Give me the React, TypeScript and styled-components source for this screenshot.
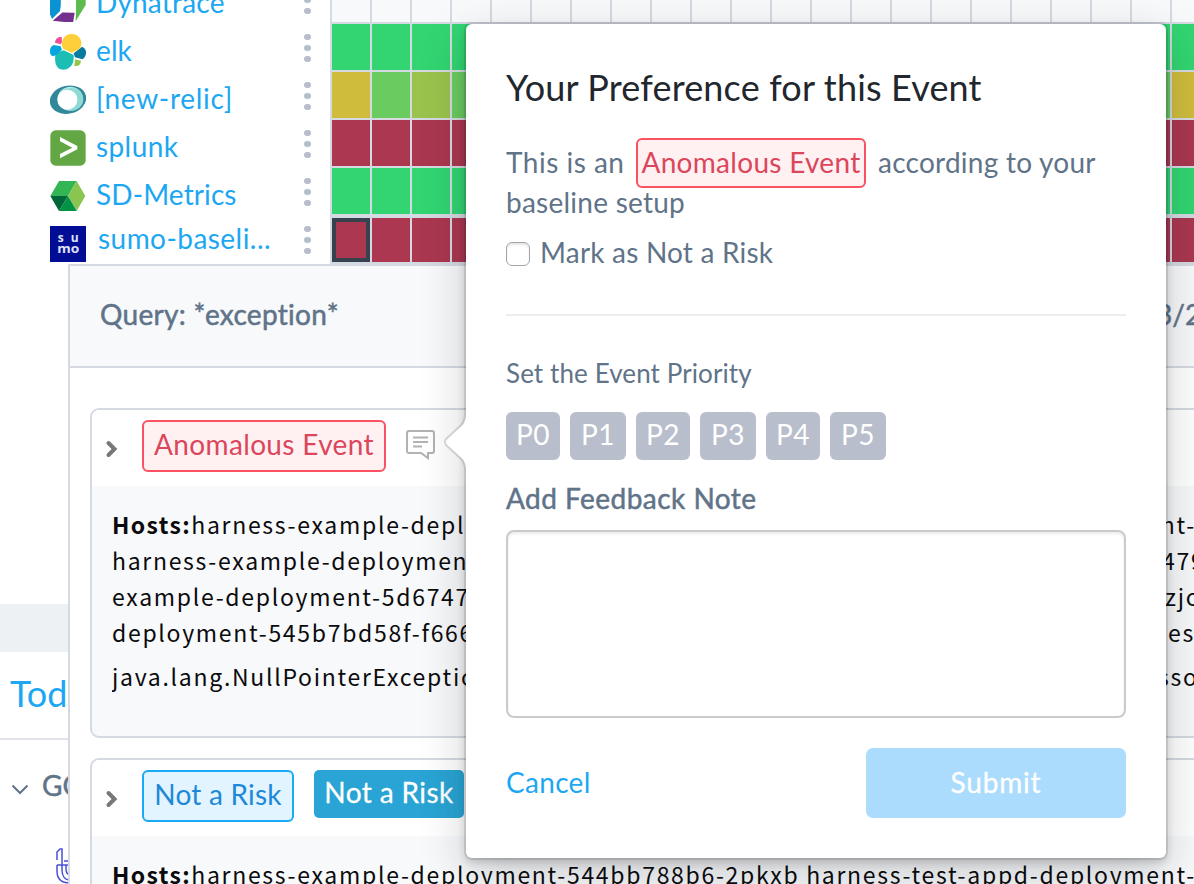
import React from "react";
import styled, { createGlobalStyle, css } from "styled-components";

const GlobalStyle = createGlobalStyle`
  * { box-sizing: border-box; }
  body { margin: 0; background: #fff; font-family: Lato, "Open Sans", sans-serif; font-size: 28px; color: #607388; }
`;

const line = "#d5d9e1";
const sky = "#1da7f2";

const semiBold = css`
  -webkit-text-stroke: 0.5px currentColor;
`;

const Page = styled.div`
  position: relative;
  width: 1194px;
  height: 884px;
  overflow: hidden;
  background: #fff;
`;

/* ---------- service list and heat map ---------- */

const Overview = styled.section`
  display: flex;
  height: 264px;
  overflow: hidden;
`;

const ServiceList = styled.ul`
  flex: none;
  list-style: none;
  width: 330px;
  margin: -20px 0 0;
  padding: 0;
`;

const ServiceRow = styled.li`
  display: flex;
  align-items: center;
  height: 48px;
  padding-left: 50px;
`;

const ServiceIcon = styled.svg`
  width: 36px;
  height: 36px;
  flex: none;
`;

const ServiceName = styled.span<{ $raised?: boolean; $spacing: number }>`
  flex: 1;
  padding-left: ${(p) => (p.$raised ? 12 : 10)}px;
  padding-bottom: ${(p) => (p.$raised ? 13 : 5)}px;
  line-height: 34px;
  color: ${sky};
  letter-spacing: ${(p) => p.$spacing}px;
  white-space: nowrap;
`;

const Kebab = styled.span`
  display: flex;
  flex-direction: column;
  gap: 4.4px;
  width: 26px;
  padding-bottom: 8px;
  i {
    width: 6.6px;
    height: 6.6px;
    border-radius: 50%;
    background: #b7bdca;
  }
`;

const HeatMap = styled.div`
  display: flex;
  flex-direction: column;
  flex: none;
  width: 882px;
  padding-left: 2px;
  gap: 2px;
  background: ${line};
`;

const HeatRow = styled.div<{ $height: number; $last?: boolean }>`
  display: flex;
  gap: 2px;
  height: ${(p) => p.$height}px;
  margin-top: ${(p) => (p.$last ? 2 : 0)}px;
`;

const tones = {
  n: "#f8f9fb",
  g: "#32d572",
  y: "#cfbc3d",
  l: "#6acc60",
  o: "#9ac34d",
  r: "#ab3750",
};

const HeatCell = styled.div<{ $tone: keyof typeof tones; $selected?: boolean }>`
  flex: none;
  width: 38px;
  background: ${(p) => tones[p.$tone]};
  ${(p) => p.$selected && css`border: 4px solid #37424e;`}
`;

/* ---------- lower sidebar ---------- */

const Sidebar = styled.aside`
  width: 200px;
  padding-top: 340px;
`;

const SidebarBand = styled.div`
  height: 48px;
  background: #eef1f4;
`;

const SidebarTitle = styled.div`
  height: 88px;
  padding-left: 10px;
  border-bottom: 2px solid #e0e4ea;
  font-size: 36px;
  line-height: 82px;
  color: ${sky};
`;

const SidebarGroup = styled.div`
  display: flex;
  align-items: center;
  height: 92px;
  padding: 0 0 2px 11px;
  gap: 13px;
  ${semiBold}
  svg { margin-top: 9px; }
`;

const SidebarLogo = styled.svg`
  display: block;
  margin: 15px 0 0 54px;
`;

/* ---------- drawer ---------- */

const Drawer = styled.section`
  position: absolute;
  left: 68px;
  top: 264px;
  width: 1200px;
  height: 640px;
  border: 2px solid ${line};
  background: #fff;
`;

const QueryBar = styled.header`
  display: flex;
  align-items: center;
  height: 102px;
  padding: 0 0 4px 30px;
  border-bottom: 2px solid ${line};
  background: #f8f9fb;
  ${semiBold}
`;

const QueryText = styled.span`
  flex: none;
  width: 1056px;
  letter-spacing: 0.3px;
`;

const Cards = styled.div`
  display: flex;
  flex-direction: column;
  gap: 20px;
  padding: 40px 20px;
`;

const Card = styled.article`
  height: 330px;
  border: 2px solid ${line};
  border-radius: 9px;
  overflow: hidden;
  background: #f8f9fb;
`;

const CardHead = styled.div`
  display: flex;
  height: 76px;
  padding: 10px 0 0 13px;
  background: #fff;
`;

const Expander = styled.svg`
  width: 14px;
  height: 18px;
  margin: 20px 23px 0 0;
`;

const Tag = styled.span<{ $tone: "danger" | "info"; $width: number; $spacing: number }>`
  width: ${(p) => p.$width}px;
  height: 52px;
  border: 2px solid ${(p) => (p.$tone === "danger" ? "#fa5260" : "#1aa9f5")};
  border-radius: 6px;
  background: ${(p) => (p.$tone === "danger" ? "#fff1f2" : "#e1f4ff")};
  color: ${(p) => (p.$tone === "danger" ? "#dc465c" : "#1e88d8")};
  line-height: 44px;
  text-align: center;
  letter-spacing: ${(p) => p.$spacing}px;
  white-space: nowrap;
`;

const SolidTag = styled.span`
  width: 150px;
  height: 48px;
  margin-left: 20px;
  border-radius: 5px;
  background: #29a4d4;
  color: #fff;
  line-height: 44px;
  text-align: center;
  letter-spacing: 0.4px;
  -webkit-text-stroke: 0.3px currentColor;
`;

const NoteIcon = styled.svg`
  margin: 9px 0 0 19px;
`;

const Log = styled.div`
  padding: 20px 0 0 20px;
  color: #0b0b0d;
  font-family: "Noto Sans CJK SC", sans-serif;
  font-size: 23px;
  letter-spacing: 1.7px;
`;

const LogLine = styled.div<{ $gap?: number }>`
  display: flex;
  height: 36px;
  margin-top: ${(p) => p.$gap ?? 0}px;
  line-height: 36px;
  white-space: nowrap;
`;

const LogStart = styled.span<{ $width?: number }>`
  flex: none;
  width: ${(p) => (p.$width ? `${p.$width}px` : "auto")};
  overflow: hidden;
  b { font-weight: 700; letter-spacing: 1.4px; }
`;

/* ---------- popover ---------- */

const Popover = styled.div`
  position: absolute;
  left: 466px;
  top: 24px;
  width: 700px;
  height: 834px;
  padding: 40px;
  border-radius: 6px;
  background: #fff;
  box-shadow: 0 0 0 2px rgba(16, 22, 26, 0.1), 0 4px 8px rgba(16, 22, 26, 0.2),
    0 16px 48px rgba(16, 22, 26, 0.2);
`;

const PopoverArrow = styled.svg`
  position: absolute;
  left: -22px;
  top: 388px;
`;

const Title = styled.h3`
  margin: 0;
  height: 79px;
  color: #22272d;
  font-size: 36px;
  font-weight: 400;
  line-height: 46px;
  letter-spacing: 0.16px;
`;

const Sentence = styled.p`
  display: flex;
  flex-wrap: wrap;
  align-items: center;
  margin: -1px 0 1px;
  height: 80px;
  line-height: 40px;
  letter-spacing: 0.25px;
  white-space: nowrap;
`;

const Lead = styled.span`
  width: 119px;
  letter-spacing: 0.5px;
`;

const Inset = styled.span`
  display: block;
  margin: -4px 12px -6px 11px;
  height: 50px;
  span { display: block; height: 50px; line-height: 45px; }
`;

const CheckRow = styled.label`
  display: flex;
  align-items: center;
  height: 60px;
  margin-top: -1px;
  gap: 10px;
  letter-spacing: 0.2px;
`;

const CheckBox = styled.span`
  width: 24px;
  height: 24px;
  margin-top: 3px;
  border: 1.5px solid #a5a5a5;
  border-radius: 6px;
  box-shadow: inset 0 2px 2px rgba(0, 0, 0, 0.1);
`;

const Divider = styled.div`
  height: 2px;
  margin-top: 32px;
  background: #ededed;
`;

const Label = styled.div<{ $strong?: boolean }>`
  height: ${(p) => (p.$strong ? 70 : 96)}px;
  padding-top: ${(p) => (p.$strong ? 21 : 40)}px;
  font-size: ${(p) => (p.$strong ? 28 : 26)}px;
  line-height: 34px;
  letter-spacing: ${(p) => (p.$strong ? 0.46 : 0.1)}px;
  ${(p) => p.$strong && semiBold}
`;

const Priorities = styled.div`
  display: flex;
  gap: 10px;
`;

const Priority = styled.button`
  width: 54px;
  height: 48px;
  padding: 0 0 4px;
  border: 0;
  border-radius: 6px;
  background: #b8becb;
  color: #fff;
  font: inherit;
  letter-spacing: 0.5px;
  &:nth-child(even) { width: 56px; }
`;

const NoteField = styled.textarea`
  display: block;
  width: 620px;
  height: 188px;
  border: 2px solid #cacaca;
  border-radius: 8px;
  resize: none;
  box-shadow: inset 0 2px 3px rgba(0, 0, 0, 0.08);
`;

const Actions = styled.div`
  display: flex;
  justify-content: space-between;
  align-items: center;
  margin-top: 30px;
`;

const Cancel = styled.a`
  padding-bottom: 2px;
  color: ${sky};
  letter-spacing: 0.3px;
`;

const Submit = styled.button`
  width: 260px;
  height: 70px;
  padding: 0 0 3px;
  border: 0;
  border-radius: 7px;
  background: #abdcfd;
  color: #fff;
  font: inherit;
  letter-spacing: 0.8px;
  -webkit-text-stroke: 0.3px currentColor;
`;

/* ---------- data ---------- */

const DynatraceIcon = () => (
  <ServiceIcon viewBox="0 0 108 108">
    <path d="M0 12 30 0 36 45 30 75 6 99 0 85Z" fill="#0a92d2" />
    <path d="M78 20 107 12V57L77 106 78 72Z" fill="#5dbb4d" />
    <path d="M38 79 74 80 69 111 8 104Z" fill="#73308f" />
    <path d="M33 20H74V79H38L32 73Z" fill="#fff" />
  </ServiceIcon>
);

const ElkIcon = () => (
  <ServiceIcon viewBox="0 0 108 108">
    <path d="M38 18C44 3 56-1 69 0 84 2 94 14 94 28 94 38 90 44 84 47L65 56 39 44C35 36 35 26 38 18Z" fill="#fecf3a" />
    <path d="M17 57 41 49 71 63C72 78 70 89 61 98 53 106 43 109 32 106 18 102 12 83 17 57Z" fill="#1cbdb3" />
    <path d="M15 26C15 15 24 7 35 9L36 24 32 31Z" fill="#f04e98" />
    <path d="M11 33 32 37 36 47 19 63 8 67C1 63-1 56 0 49 1 41 4 36 11 33Z" fill="#07a5de" />
    <path d="M96 38C105 42 109 49 108 58 107 66 103 73 97 76L75 70 71 58 89 44Z" fill="#067a9f" />
    <path d="M75 76 93 80C92 91 86 98 73 96Z" fill="#93c74b" />
  </ServiceIcon>
);

const NewRelicIcon = () => (
  <ServiceIcon viewBox="0 0 108 108">
    <ellipse cx="54" cy="53" rx="55" ry="42" transform="rotate(-12 54 53)" fill="#31889a" />
    <ellipse cx="61" cy="50" rx="38" ry="36" fill="#b8e7e5" />
    <ellipse cx="64" cy="52" rx="36" ry="34" fill="#8fd9d6" />
    <circle cx="52" cy="53" r="30" fill="#fff" />
  </ServiceIcon>
);

const SplunkIcon = () => (
  <ServiceIcon viewBox="0 0 108 108">
    <rect x="1" y="1" width="106" height="106" rx="16" fill="#63a744" />
    <path d="M30 21 82 48V58L30 85V72L67 53 30 34Z" fill="#fff" />
  </ServiceIcon>
);

const StackdriverIcon = () => (
  <ServiceIcon viewBox="0 0 108 108">
    <path d="M27 9H80L54 54H1Z" fill="#34b553" />
    <path d="M80 9 106 54 80 99 54 54Z" fill="#8ac64f" />
    <path d="M1 54H54L27 99Z" fill="#006838" />
    <path d="M54 54 80 99H27Z" fill="#009245" />
  </ServiceIcon>
);

const SumoText = styled.text`
  font-family: "Open Sans", sans-serif;
  font-size: 36px;
  font-weight: 700;
  fill: #dfe2f6;
`;

const SumoIcon = () => (
  <ServiceIcon viewBox="0 0 108 108">
    <rect width="108" height="108" fill="#020d96" />
    <SumoText x="23" y="49">s</SumoText>
    <SumoText x="62" y="49">u</SumoText>
    <SumoText x="22" y="82" textLength="66" lengthAdjust="spacingAndGlyphs">mo</SumoText>
  </ServiceIcon>
);

const services = [
  { name: "Dynatrace", Icon: DynatraceIcon, spacing: 0.2 },
  { name: "elk", Icon: ElkIcon, spacing: 0.1 },
  { name: "[new-relic]", Icon: NewRelicIcon, spacing: 0.7 },
  { name: "splunk", Icon: SplunkIcon, spacing: 0.4 },
  { name: "SD-Metrics", Icon: StackdriverIcon, spacing: 0.1 },
  { name: "sumo-baseli...", Icon: SumoIcon, spacing: 0.45, raised: true },
];

type Tone = keyof typeof tones;
const heat: { height: number; cells: string }[] = [
  { height: 22, cells: "nnnnnnnnnnnnnnnnnnnnnn" },
  { height: 46, cells: "gggggggggggggggggggggg" },
  { height: 46, cells: "ylolylolylolylolylolly" },
  { height: 46, cells: "rrrrrrrrrrrrrrrrrrrrrr" },
  { height: 46, cells: "gggggggggggggggggggggg" },
  { height: 44, cells: "rrrrrrrrrrrrrrrrrrrrrr" },
];

const Chevron = () => (
  <Expander viewBox="0 0 14 18">
    <path d="M3.5 3 9.5 9 3.5 15" fill="none" stroke="#77777a" strokeWidth="4" strokeLinecap="round" />
  </Expander>
);

const HostsLine = () => (
  <LogLine>
    <LogStart>
      <b>Hosts:</b>harness-example-deployment-544bb788b6-2pkxb harness-test-appd-deployment-
    </LogStart>
  </LogLine>
);

export default function App() {
  return (
    <Page>
      <GlobalStyle />
      <Overview>
        <ServiceList>
          {services.map(({ name, Icon, spacing, raised }) => (
            <ServiceRow key={name}>
              <Icon />
              <ServiceName $spacing={spacing} $raised={raised}>{name}</ServiceName>
              <Kebab><i /><i /><i /></Kebab>
            </ServiceRow>
          ))}
        </ServiceList>
        <HeatMap>
          {heat.map((row, r) => (
            <HeatRow key={r} $height={row.height} $last={r === heat.length - 1}>
              {row.cells.split("").map((tone, c) => (
                <HeatCell key={c} $tone={tone as Tone} $selected={r === heat.length - 1 && c === 0} />
              ))}
            </HeatRow>
          ))}
        </HeatMap>
      </Overview>

      <Sidebar>
        <SidebarBand />
        <SidebarTitle>Today</SidebarTitle>
        <SidebarGroup>
          <svg width="18" height="12" viewBox="0 0 18 12">
            <path d="M1.5 1.5 9 9 16.5 1.5" fill="none" stroke="#607388" strokeWidth="2" />
          </svg>
          GO
        </SidebarGroup>
        <SidebarLogo width="30" height="38" viewBox="0 0 30 38" fill="none" stroke="#4a50dc" strokeWidth="1.5">
          <path d="M3 13V5L6 2H8V23C8 29 11 33 16 33M3 18V24C3 31 7 36 16 36M3 18H20M10 14H20M12 18V22C12 26 13 28 17 28" />
        </SidebarLogo>
      </Sidebar>

      <Drawer>
        <QueryBar>
          <QueryText>Query: *exception*</QueryText>
          <span>3/26</span>
        </QueryBar>
        <Cards>
          <Card>
            <CardHead>
              <Chevron />
              <Tag $tone="danger" $width={244} $spacing={0.35}>Anomalous Event</Tag>
              <NoteIcon width="32" height="32" viewBox="0 0 32 32" fill="none" stroke="#b2b2b2" strokeWidth="2">
                <path d="M4 2H27Q29 2 29 4V22Q29 24 27 24H23V29L16 24H4Q2 24 2 22V4Q2 2 4 2Z" />
                <path d="M8 8.5H23M8 13H23M8 17.5H17" />
              </NoteIcon>
            </CardHead>
            <Log>
              <HostsLine />
              <LogLine>
                <LogStart $width={1050}>harness-example-deployment-5d6747fd9b-kx7rm</LogStart>479
              </LogLine>
              <LogLine>
                <LogStart $width={1053}>example-deployment-5d6747fd9b-vq2mz</LogStart>zjc
              </LogLine>
              <LogLine>
                <LogStart $width={1056}>deployment-545b7bd58f-f666k</LogStart>es
              </LogLine>
              <LogLine $gap={8}>
                <LogStart $width={1046}>java.lang.NullPointerException</LogStart>sso
              </LogLine>
            </Log>
          </Card>
          <Card>
            <CardHead>
              <Chevron />
              <Tag $tone="info" $width={152} $spacing={0.2}>Not a Risk</Tag>
              <SolidTag>Not a Risk</SolidTag>
            </CardHead>
            <Log>
              <HostsLine />
            </Log>
          </Card>
        </Cards>
      </Drawer>

      <Popover>
        <PopoverArrow width="60" height="60" viewBox="0 0 30 30">
          <path
            d="M8.11 6.302c1.015-.936 1.887-2.922 1.887-4.297v26c0-1.378-.868-3.357-1.888-4.297L.925 17.09c-1.237-1.14-1.233-3.034 0-4.17L8.11 6.302z"
            fill="#10161a"
            fillOpacity="0.15"
          />
          <path
            d="M8.787 7.036c1.22-1.125 2.21-3.376 2.21-5.03V0v30-2.005c0-1.654-.983-3.9-2.21-5.03l-7.183-6.616c-.81-.746-.802-1.96 0-2.7l7.183-6.614z"
            fill="#fff"
          />
        </PopoverArrow>
        <Title>Your Preference for this Event</Title>
        <Sentence>
          <Lead>This is an</Lead>
          <Inset>
            <Tag $tone="danger" $width={230} $spacing={0.3}>Anomalous Event</Tag>
          </Inset>
          <span>according to your</span>
          <span>baseline setup</span>
        </Sentence>
        <CheckRow>
          <CheckBox />
          Mark as Not a Risk
        </CheckRow>
        <Divider />
        <Label>Set the Event Priority</Label>
        <Priorities>
          {[0, 1, 2, 3, 4, 5].map((n) => (
            <Priority key={n}>P{n}</Priority>
          ))}
        </Priorities>
        <Label $strong>Add Feedback Note</Label>
        <NoteField />
        <Actions>
          <Cancel>Cancel</Cancel>
          <Submit>Submit</Submit>
        </Actions>
      </Popover>
    </Page>
  );
}
